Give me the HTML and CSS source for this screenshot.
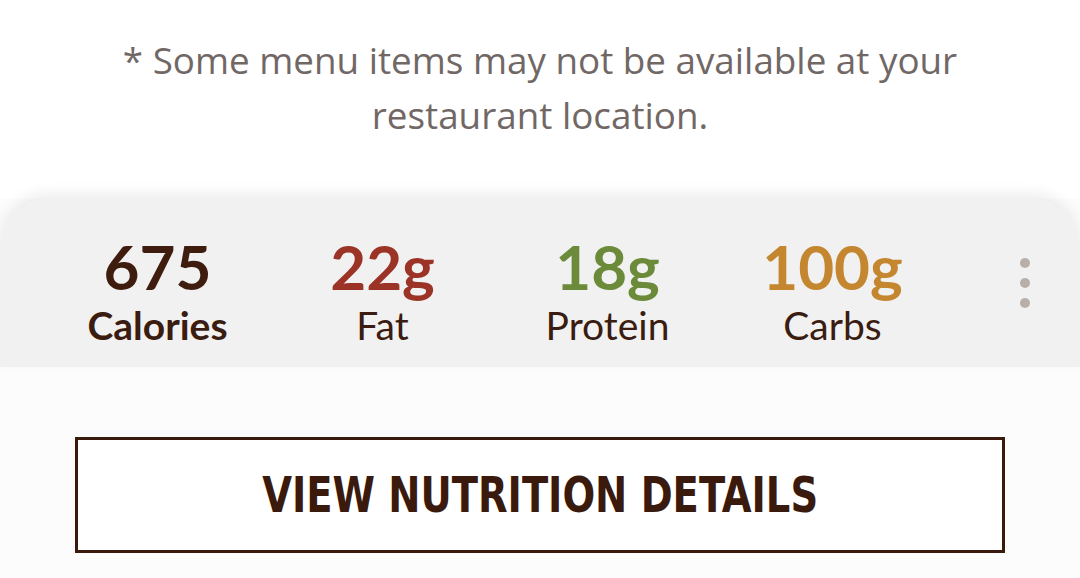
FILE: index.html
```html
<!DOCTYPE html>
<html lang="en">
<head>
    <meta charset="UTF-8">
    <meta name="viewport" content="width=device-width, initial-scale=1.0">
    <title>Nutrition</title>
    <link rel="stylesheet" href="styles.css">
</head>
<body>
    <!-- Aviso sobre disponibilidade -->
    <p class="aviso">* Some menu items may not be available at your restaurant location.</p>

    <!-- Resumo nutricional -->
    <div class="resumo">
        <div class="item">
            <span class="valor calorias">675</span>
            <span class="rotulo forte">Calories</span>
        </div>
        <div class="item">
            <span class="valor gordura">22g</span>
            <span class="rotulo">Fat</span>
        </div>
        <div class="item">
            <span class="valor proteina">18g</span>
            <span class="rotulo">Protein</span>
        </div>
        <div class="item">
            <span class="valor carbos">100g</span>
            <span class="rotulo">Carbs</span>
        </div>
        <div class="mais">
            <span class="ponto"></span>
            <span class="ponto"></span>
            <span class="ponto"></span>
        </div>
    </div>

    <div class="detalhes">
        <button class="btn-detalhes"><span>VIEW NUTRITION DETAILS</span></button>
    </div>
</body>
</html>
```

FILE: styles.css
```css
/* Corpo da página */
body {
    margin: 0;
    background-color: #fcfcfc;
    font-family: Lato, "Open Sans", sans-serif;
    overflow: hidden;
}

/* Texto de aviso */
.aviso {
    margin: 0;
    padding: 33px 100px 0;
    background-color: #fff;
    font-family: "Open Sans", sans-serif;
    font-size: 36.8px;
    line-height: 55px;
    color: #716866;
    text-align: center;
    height: 199px;
    box-sizing: border-box;
}

/* Painel com calorias e macros */
.resumo {
    display: flex;
    align-items: flex-start;
    height: 168px;
    box-sizing: border-box;
    padding: 35px 0 0 45px;
    background-color: #f1f1f1;
    border-radius: 48px 48px 0 0;
    box-shadow: 0 -6px 14px rgba(0, 0, 0, 0.07);
}

.item {
    width: 225px;
    display: flex;
    flex-direction: column;
    align-items: center;
}

.valor {
    font-size: 62px;
    font-weight: 700;
    line-height: 64px;
}

.calorias { color: #3e1c0e; }
.gordura { color: #9b3327; }
.proteina { color: #6c8b3a; }
.carbos { color: #c4862f; }

.rotulo {
    font-size: 39px;
    line-height: 54px;
    color: #3a1c10;
}

.rotulo.forte {
    font-weight: 700;
}

/* Botão de três pontos */
.mais {
    margin: 24px 0 0 75px;
    display: flex;
    flex-direction: column;
    gap: 10px;
}

.ponto {
    width: 10px;
    height: 10px;
    border-radius: 50%;
    background-color: #b8afa8;
}

/* Área do botão de detalhes */
.detalhes {
    padding: 70px 75px 0;
}

.btn-detalhes {
    width: 100%;
    height: 116px;
    background-color: #fff;
    border: 3px solid #3a1a0d;
    font-family: "DejaVu Sans Condensed", "DejaVu Sans", sans-serif;
    font-stretch: condensed;
    font-weight: 700;
    font-size: 50px;
    color: #3a1a0d;
    cursor: pointer;
}

.btn-detalhes span {
    display: inline-block;
    transform: scaleX(0.855);
}
```
